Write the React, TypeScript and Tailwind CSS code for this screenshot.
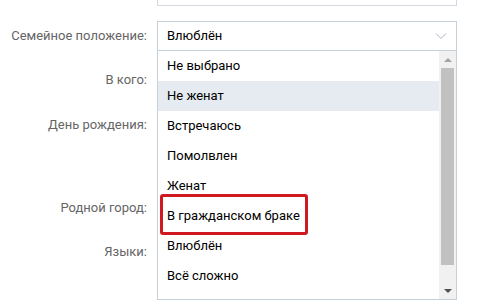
import React from 'react';

const options = [
  'Не выбрано',
  'Не женат',
  'Встречаюсь',
  'Помолвлен',
  'Женат',
  'В гражданском браке',
  'Влюблён',
  'Всё сложно',
];

const labels = [
  { text: 'В кого:', mt: 'mt-[19px]' },
  { text: 'День рождения:', mt: 'mt-[25px]' },
  { text: 'Родной город:', mt: 'mt-[63px]' },
  { text: 'Языки:', mt: 'mt-[24px]' },
];

function Chevron() {
  return (
    <svg width="12" height="8" viewBox="0 0 12 8" className="text-[#b0b8c0]">
      <path d="M1 1.5 L6 6.5 L11 1.5" fill="none" stroke="currentColor" strokeWidth="1" />
    </svg>
  );
}

export default function App() {
  return (
    <div className="relative w-[487px] h-[305px] overflow-hidden bg-white font-['Roboto',sans-serif] text-[13px]">
      {/* bottom of the field above */}
      <div className="ml-[157px] w-[300px] h-[6px] border border-t-0 border-[#d3d9de]" />

      <div className="flex items-center mt-[15px] h-[30px]">
        <div className="w-[147px] text-right text-[#656565]">Семейное положение:</div>
        <div className="ml-[10px] w-[300px] h-[30px] border border-[#c5d0db] flex items-center justify-between pl-[9px] pr-[9px] text-black">
          <span>Влюблён</span>
          <Chevron />
        </div>
      </div>

      <div className="flex flex-col">
        {labels.map((l, i) => (
          <div key={i} className={`w-[147px] text-right text-[#656565] leading-[20px] ${l.mt}`}>
            {l.text}
          </div>
        ))}
      </div>

      {/* opened list */}
      <div className="absolute left-[157px] top-[50px] w-[300px] h-[250px] border border-[#c5d0db] bg-white flex">
        <ul className="flex-1">
          {options.map((o, i) => (
            <li
              key={i}
              className={`h-[30px] flex items-center pl-[9px] text-black ${i === 1 ? 'bg-[#e5ebf1]' : ''}`}
            >
              {o}
            </li>
          ))}
        </ul>
        <div className="w-[17px] bg-[#f1f1f1] flex flex-col items-center">
          <div className="h-[17px] flex items-center justify-center">
            <div className="w-0 h-0 border-l-[4px] border-r-[4px] border-b-[4px] border-l-transparent border-r-transparent border-b-[#a3a3a3]" />
          </div>
          <div className="w-[13px] h-[197px] bg-[#c1c1c1]" />
          <div className="flex-1 flex items-end justify-center pb-[6px]">
            <div className="w-0 h-0 border-l-[4px] border-r-[4px] border-t-[4px] border-l-transparent border-r-transparent border-t-[#505050]" />
          </div>
        </div>
      </div>

      <div className="absolute left-[160px] top-[194px] w-[148px] h-[41px] border-[3px] border-[#d01820] rounded-[3px]" />
    </div>
  );
}
